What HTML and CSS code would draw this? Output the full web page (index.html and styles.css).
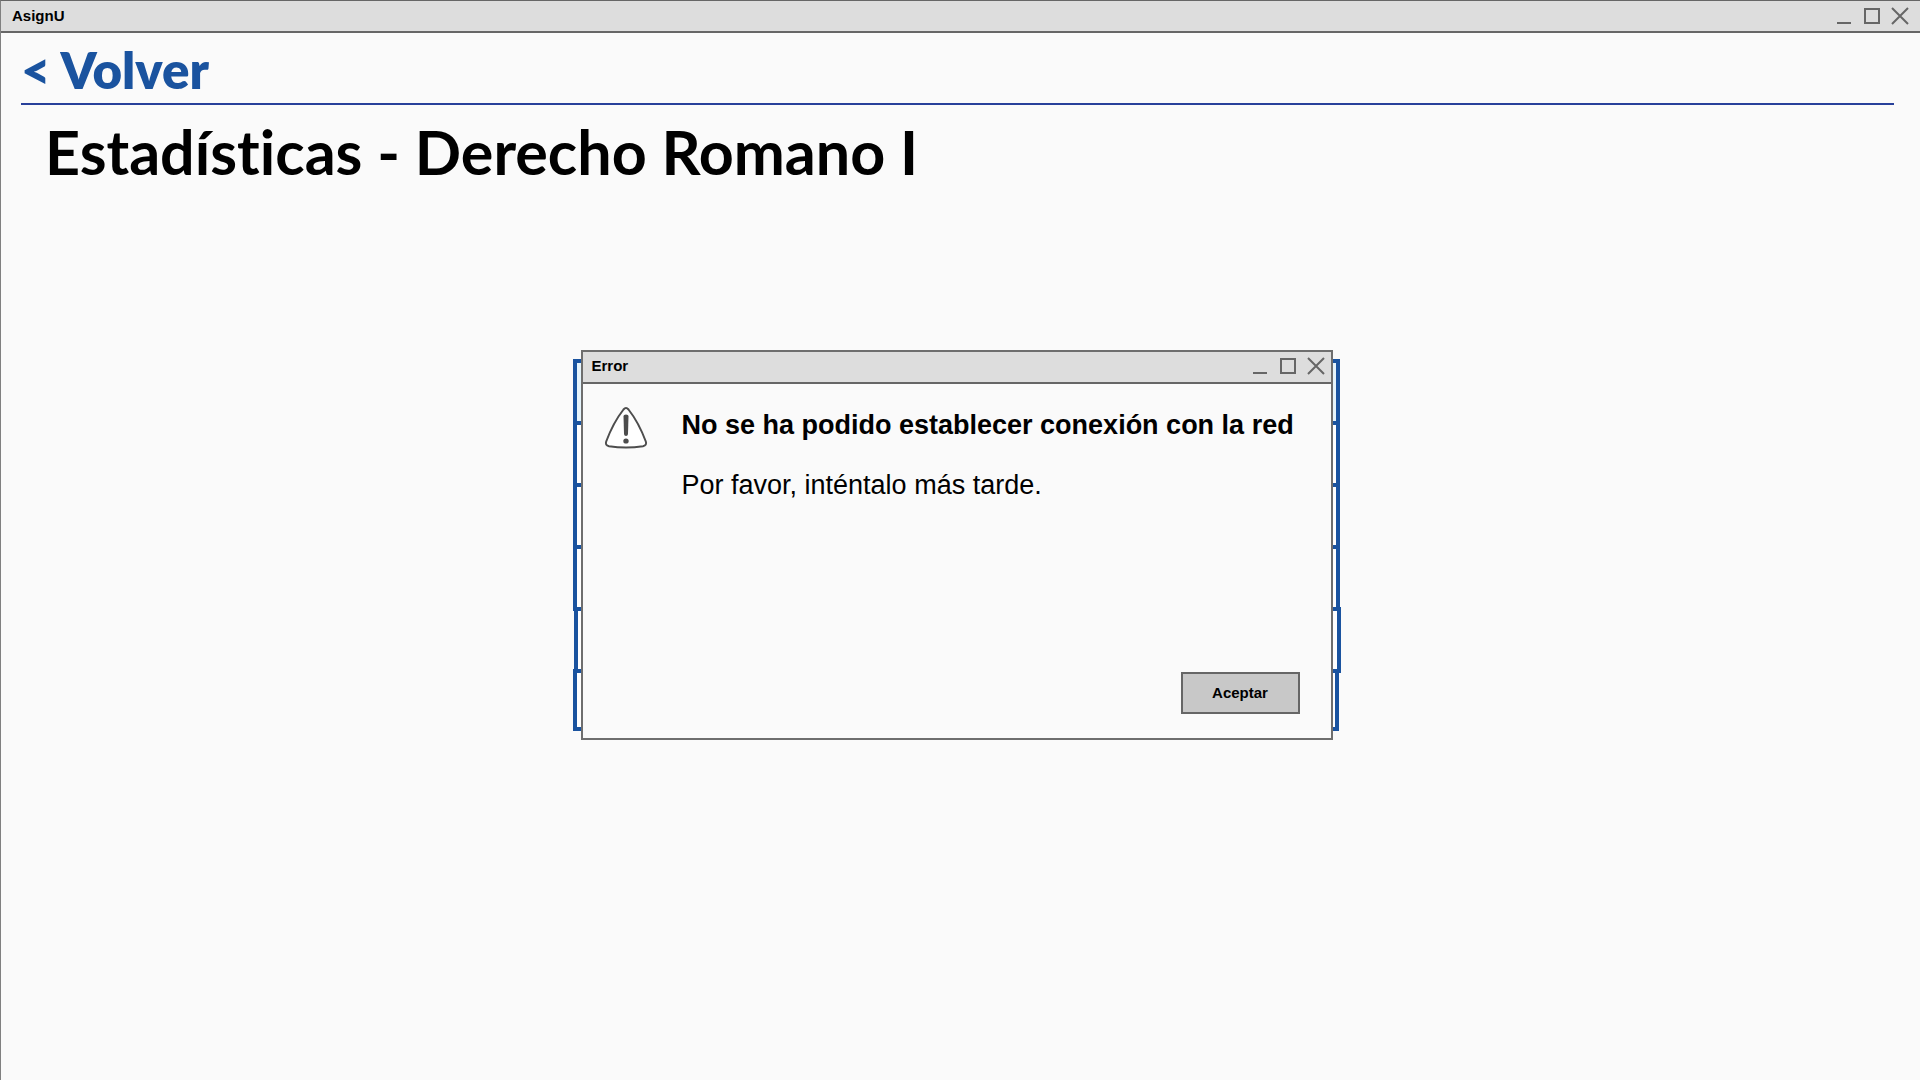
FILE: index.html
```html
<!DOCTYPE html>
<html lang="es">
<head>
<meta charset="utf-8">
<meta name="viewport" content="width=device-width, initial-scale=1">
<title>AsignU</title>
<link rel="stylesheet" href="styles.css">
</head>
<body>
<div class="window">
  <header class="titlebar titlebar--main">
    <span class="titlebar-text">AsignU</span>
    <div class="window-controls">
      <button type="button" class="window-button" aria-label="Minimizar"><svg viewBox="0 0 18 18"><path d="M2 16H16"/></svg></button>
      <button type="button" class="window-button" aria-label="Maximizar"><svg viewBox="0 0 18 18"><path d="M2 2H16V16H2Z"/></svg></button>
      <button type="button" class="window-button" aria-label="Cerrar"><svg viewBox="0 0 18 18"><path d="M1 1L17 17M17 1L1 17"/></svg></button>
    </div>
  </header>
  <main class="page">
    <nav class="page-nav"><a href="#" class="back">&lt; Volver</a></nav>
    <h1 class="page-title">Estadísticas - Derecho Romano I</h1>
    <div class="stage">
      <div class="stats">
        <div class="stats-row stats-row--head"></div>
        <div class="stats-row"></div>
        <div class="stats-row"></div>
        <div class="stats-row"></div>
        <div class="stats-row stats-row--shifted"></div>
        <div class="stats-row stats-row--last"></div>
      </div>
      <section class="dialog" role="alertdialog" aria-labelledby="error-title" aria-describedby="error-text">
        <header class="titlebar">
          <span class="titlebar-text">Error</span>
          <div class="window-controls">
            <button type="button" class="window-button" aria-label="Minimizar"><svg viewBox="0 0 18 18"><path d="M2 16H16"/></svg></button>
            <button type="button" class="window-button" aria-label="Maximizar"><svg viewBox="0 0 18 18"><path d="M2 2H16V16H2Z"/></svg></button>
            <button type="button" class="window-button" aria-label="Cerrar"><svg viewBox="0 0 18 18"><path d="M1 1L17 17M17 1L1 17"/></svg></button>
          </div>
        </header>
        <div class="dialog-body">
          <svg class="warning" viewBox="0 0 44 44" aria-hidden="true">
            <path class="warning-outline" d="M19.500 3.500Q22 .5 24.500 3.500C32 13 37.500 24 41.800 35.500Q43.200 39.300 39 40.200Q22 42.600 5 40.200Q.8 39.300 2.200 35.500C6.500 24 12 13 19.500 3.500Z"/>
            <path class="warning-fill" d="M19.500 10Q19.500 8.500 22 8.500T24.500 10L24 28Q23.800 30 22 30T20 28Z"/>
            <ellipse class="warning-fill" cx="22" cy="35" rx="2.700" ry="2.600"/>
          </svg>
          <div class="message">
            <h2 class="message-title" id="error-title">No se ha podido establecer conexión con la red</h2>
            <p class="message-text" id="error-text">Por favor, inténtalo más tarde.</p>
          </div>
        </div>
        <footer class="dialog-actions"><button type="button" class="accept">Aceptar</button></footer>
      </section>
    </div>
  </main>
</div>
</body>
</html>
```

FILE: styles.css
```css
* { box-sizing: border-box; }

body {
  margin: 0;
  background: #fafafa;
  color: #000;
  font-family: "Liberation Sans", Arial, sans-serif;
}

h1, h2, p { margin: 0; font-weight: inherit; }

.window {
  min-height: 100vh;
  border-top: 1px solid #666;
  border-left: 1px solid #808080;
}

.titlebar {
  display: flex;
  align-items: center;
  justify-content: space-between;
  height: 32px;
  padding: 0 6px 2px 9px;
  background: #ddd;
  border-bottom: 2px solid #666;
}

.titlebar--main { padding: 0 11px; }

.titlebar-text {
  font-size: 15px;
  line-height: 20px;
  font-weight: bold;
}

.window-controls { display: flex; gap: 10px; }

.window-button {
  width: 18px;
  height: 18px;
  padding: 0;
  border: 0;
  background: none;
}

.window-button svg {
  display: block;
  width: 18px;
  height: 18px;
  fill: none;
  stroke: #666;
  stroke-width: 2;
}

.page { padding: 0 26px 0 20px; }

.page-nav {
  height: 72px;
  padding-top: 7px;
  border-bottom: 2px solid #28409a;
}

.back {
  display: inline-block;
  color: #1a539f;
  font-family: Lato, sans-serif;
  font-size: 51px;
  line-height: 60px;
  font-weight: 800;
  text-decoration: none;
}

.page-title {
  padding: 11px 0 0 24px;
  font-family: Lato, sans-serif;
  font-size: 61px;
  line-height: 72px;
  font-weight: 700;
  font-variant-ligatures: none;
}

.stage {
  display: grid;
  place-items: center;
  padding: 162px 2px 0 0;
}

.stats, .dialog { grid-area: 1 / 1; }

.stats {
  display: flex;
  flex-direction: column;
  width: 768px;
}

.stats-row {
  width: 767px;
  height: 66px;
  margin-bottom: -4px;
  background: #fff;
  border: 4px solid #1a539f;
}

.stats-row--head { background: #e6f4fb; }
.stats-row--shifted { align-self: flex-end; }
.stats-row--last { width: 766px; height: 62px; margin-bottom: 0; }

.dialog {
  display: flex;
  flex-direction: column;
  z-index: 1;
  width: 752px;
  max-width: 100%;
  min-height: 390px;
  background: #fafafa;
  border: 2px solid #6e6e6e;
}

.dialog-body {
  display: flex;
  flex: 1;
  gap: 34px;
  padding: 22px 24px 0 21px;
}

.warning {
  flex: none;
  width: 44px;
  height: 44px;
}

.warning-outline { fill: #fff; stroke: #4d4d4d; stroke-width: 2; }
.warning-fill { fill: #4d4d4d; }

.message {
  display: flex;
  flex-direction: column;
  gap: 28px;
  padding-top: 3px;
}

.message-title, .message-text {
  font-size: 27px;
  line-height: 32px;
}

.message-title { font-weight: bold; }

.dialog-actions {
  display: flex;
  justify-content: flex-end;
  padding: 0 31px 24px;
}

.accept {
  width: 119px;
  height: 42px;
  padding: 0 0 2px;
  background: #c8c8c8;
  border: 2px solid #666;
  color: #000;
  font: bold 15px "Liberation Sans", Arial, sans-serif;
}
```
